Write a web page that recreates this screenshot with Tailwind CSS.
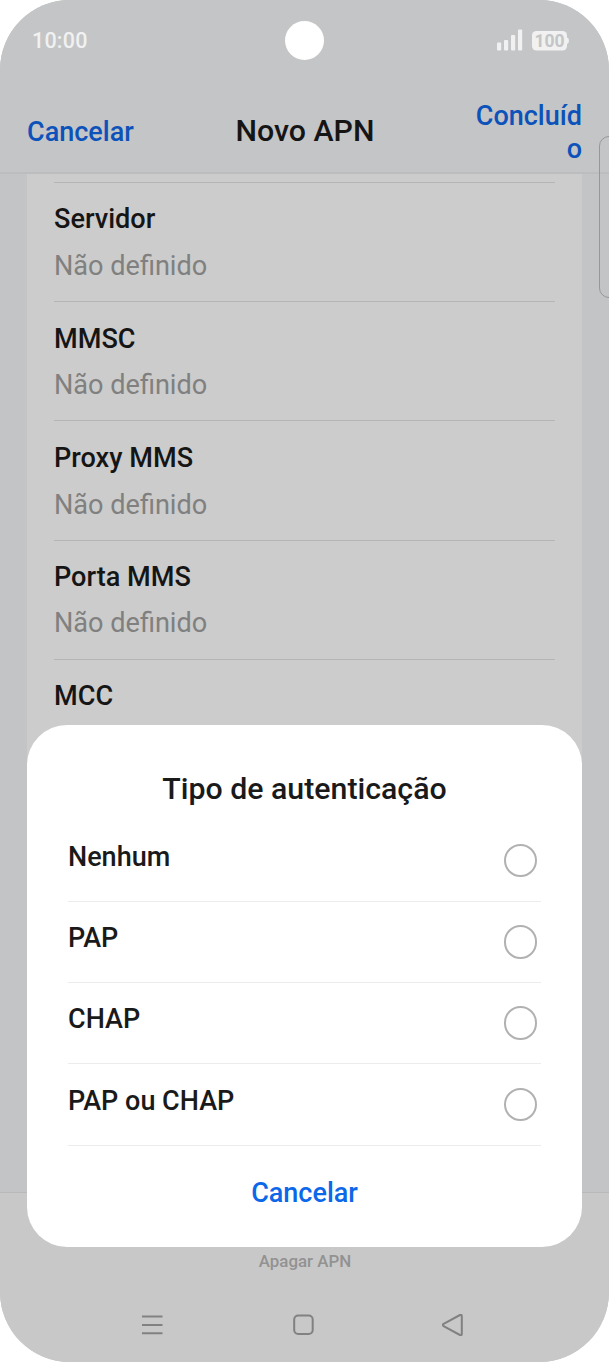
<!DOCTYPE html>
<html lang="pt">
<head>
<meta charset="utf-8">
<title>Novo APN</title>
<script src="https://cdn.jsdelivr.net/npm/@tailwindcss/browser@4"></script>
</head>
<body class="bg-white">
<div class="relative flex h-[1362px] w-[609px] flex-col overflow-hidden rounded-[70px] bg-[#c3c4c6] font-['Roboto',sans-serif] font-medium text-[#151515]">
  <header class="flex h-[174px] shrink-0 flex-col border-b-2 border-[#bcbdbf] bg-[#c3c5c6]">
    <div class="grid h-[81px] shrink-0 grid-cols-[1fr_38px_1fr] items-center pl-8 pr-[40px]">
      <span class="pt-px text-[21.5px] leading-none tracking-[0.2px] text-[#f1f1f1]">10:00</span>
      <span class="relative left-[3px] size-[39px] rounded-full bg-white"></span>
      <svg class="justify-self-end" width="74" height="24" viewBox="0 0 74 24" fill="#f1f1f1">
        <rect x="2" y="13.500" width="4.200" height="8" rx="1"/><rect x="9" y="11" width="4.200" height="10.500" rx="1"/><rect x="16" y="6" width="4.200" height="15.500" rx="1"/><rect x="23" y="0.500" width="4.200" height="21" rx="1"/>
        <rect x="37" y="2" width="35" height="19.500" rx="4.500"/><path d="M72 8.500q2 .5 2 3.300t-2 3.300z"/>
        <text x="54.500" y="18" text-anchor="middle" font-size="17.500" font-weight="700" fill="#c3c5c6">100</text>
      </svg>
    </div>
    <div class="grid grow grid-cols-[110px_1fr_110px] items-center px-[27px] pt-[11px] text-[27px] leading-[33px] text-[#0c52ba]">
      <span>Cancelar</span>
      <h1 class="-mt-1 pl-px text-center text-[30.3px] font-medium text-[#151515]">Novo APN</h1>
      <span class="pt-0.5 text-right">Concluíd<br>o</span>
    </div>
  </header>
  <main class="mx-[27px] h-[1018px] shrink-0 overflow-hidden bg-[#ccc] px-[27px] pt-2 text-[27.1px] leading-8">
    <section class="h-[119.2px] border-t border-[#b5b5b5] pt-5"><h2>Servidor</h2><p class="mt-[15px] font-normal text-[#808080]">Não definido</p></section>
    <section class="h-[119.2px] border-t border-[#b5b5b5] pt-[20.5px]"><h2>MMSC</h2><p class="mt-[14.5px] font-normal text-[#808080]">Não definido</p></section>
    <section class="h-[119.2px] border-t border-[#b5b5b5] pt-[20.5px]"><h2>Proxy MMS</h2><p class="mt-[15px] font-normal text-[#808080]">Não definido</p></section>
    <section class="h-[119.2px] border-t border-[#b5b5b5] pt-5"><h2>Porta MMS</h2><p class="mt-[14.5px] font-normal text-[#808080]">Não definido</p></section>
    <section class="border-t border-[#b5b5b5] pt-5"><h2>MCC</h2></section>
  </main>
  <footer class="flex grow flex-col items-center border-t border-[#b9b9b9] bg-[#c8c8c8] pt-[58px]">
    <span class="pl-px text-[16.9px] leading-5 text-[#929292]">Apagar APN</span>
    <nav class="mt-[43px] flex w-full justify-between pl-[141px] pr-[145px]">
      <svg width="22" height="22" viewBox="0 0 22 22" stroke="#818181" stroke-width="2"><path d="M1 2.500h20.500M1 11h20.500M1 19.300h20.500"/></svg>
      <svg class="ml-[2px]" width="22" height="22" viewBox="0 0 22 22" fill="none" stroke="#818181" stroke-width="2"><rect x="1.200" y="1.500" width="18.500" height="18.500" rx="4"/></svg>
      <svg width="22" height="22" viewBox="0 0 22 22" fill="none" stroke="#818181" stroke-width="2" stroke-linejoin="round"><path d="M1.600 9.800 18 1Q19.800 .4 19.800 2v18q0 1.600-1.800 1L1.600 12.200q-1.600-1.200 0-2.400z"/></svg>
    </nav>
  </footer>
  <div class="absolute left-[599px] top-[136px] h-[162px] w-5 rounded-[10px] border border-[#96979a]"></div>
  <div role="dialog" class="absolute left-[27px] top-[725px] flex h-[522px] w-[555px] flex-col rounded-[40px] bg-white px-[41px] text-[27px] leading-8 text-[#1a1a1a]">
    <h2 class="pt-12 text-center text-[30.3px]">Tipo de autenticação</h2>
    <ul class="mt-[15.4px]">
      <li class="flex h-[81.3px] items-center justify-between border-b border-[#ececec] pr-1"><span class="-mt-[7px]">Nenhum</span><i class="size-[33.5px] rounded-full border-2 border-[#b1b1b1]"></i></li>
      <li class="flex h-[81.3px] items-center justify-between border-b border-[#ececec] pr-1"><span class="-mt-[7px]">PAP</span><i class="size-[33.5px] rounded-full border-2 border-[#b1b1b1]"></i></li>
      <li class="flex h-[81.3px] items-center justify-between border-b border-[#ececec] pr-1"><span class="-mt-[7.5px]">CHAP</span><i class="size-[33.5px] rounded-full border-2 border-[#b1b1b1]"></i></li>
      <li class="flex h-[81.3px] items-center justify-between border-b border-[#ececec] pr-1"><span class="-mt-[7px]">PAP ou CHAP</span><i class="size-[33.5px] rounded-full border-2 border-[#b1b1b1]"></i></li>
    </ul>
    <button class="mt-[31px] font-medium text-[#0c67e9]">Cancelar</button>
  </div>
</div>
</body>
</html>
